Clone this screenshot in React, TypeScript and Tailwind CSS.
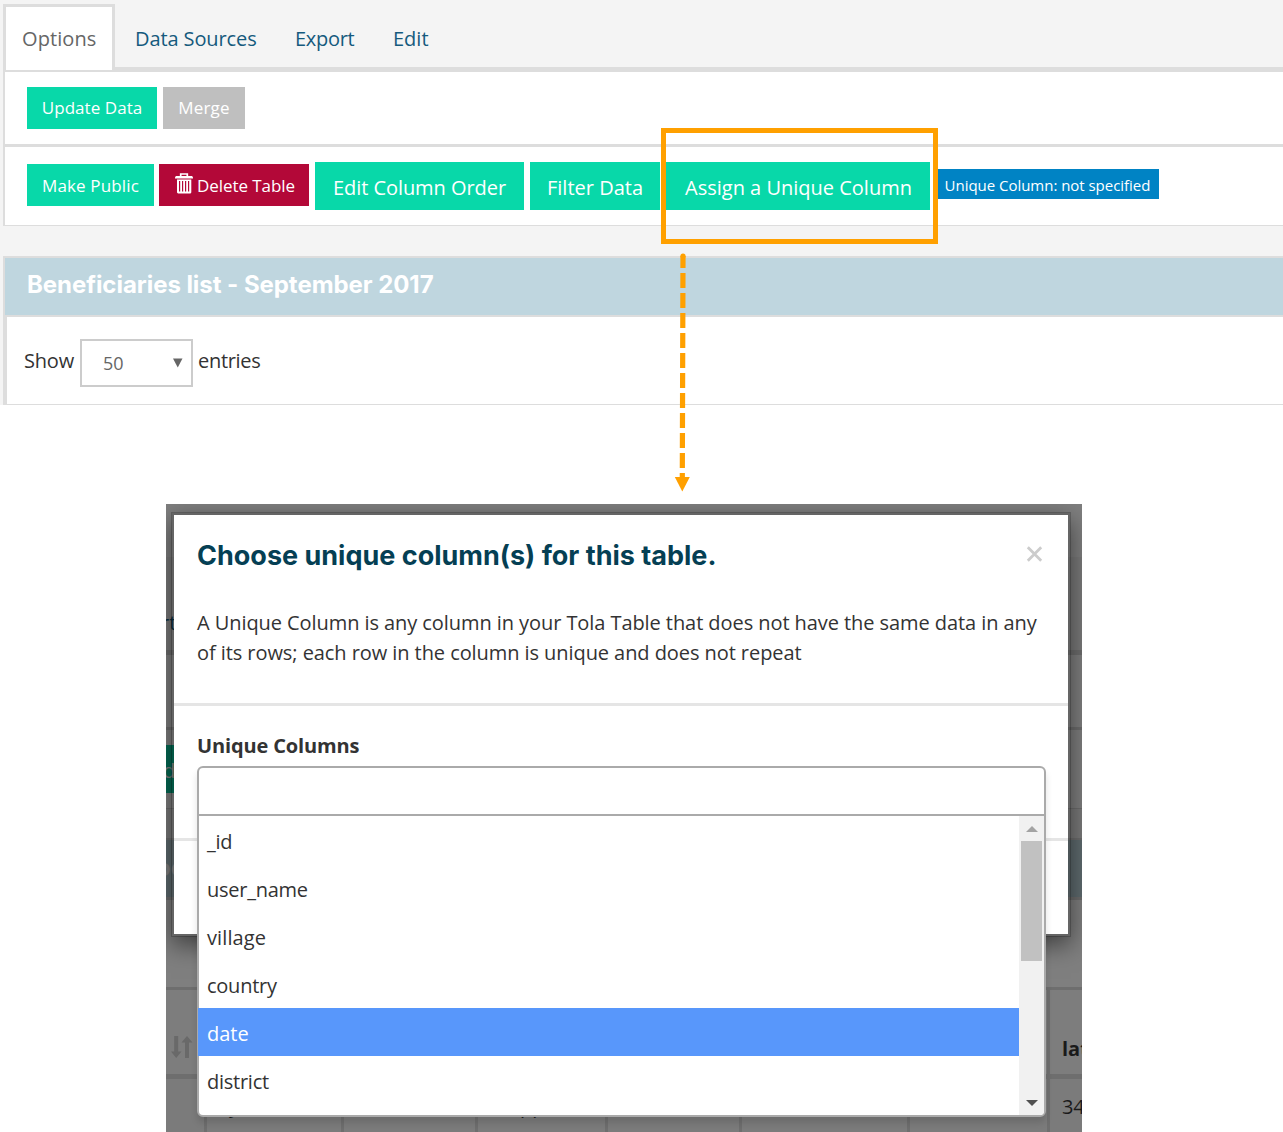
import type { ReactNode } from "react";

const columns = ["_id", "user_name", "village", "country", "date", "district"];

function TrashIcon() {
  return (
    <svg width="18" height="21" viewBox="0 0 18 21" className="shrink-0" fill="none">
      <path d="M5.7 3V1h6.6v2" stroke="#fff" strokeWidth="1.7" />
      <path d="M0 5.6V4.2L1 3h16l1 1.2v1.4z" fill="#fff" />
      <path
        fillRule="evenodd"
        fill="#fff"
        d="M2 6.6h14.3V19.5L15.5 20.5H3L2 19.5zM4 8v10.5h1.2V8zM7 8v10.5h1.2V8zM10 8v10.5h1.2V8zM13 8v10.5h1.2V8z"
      />
    </svg>
  );
}

function SortIcon() {
  return (
    <svg width="22" height="22" viewBox="0 0 22 22" fill="#696969">
      <path d="M3.2 0h4v15.5H10.5L5.2 22 0 15.500h3.200z" />
      <path d="M14 22h4V6.500h3.500L16 0 10.500 6.500H14z" />
    </svg>
  );
}

function Button({ className, children }: { className: string; children: ReactNode }) {
  return (
    <button className={`flex shrink-0 items-center justify-center whitespace-nowrap text-white ${className}`}>
      {children}
    </button>
  );
}

function OptionsPanel() {
  return (
    <section className="h-[405px] shrink-0 bg-[#f4f4f4] pl-[3px] pt-1 text-[20px] text-[#155a7d]">
      <nav className="flex h-[66px] items-stretch">
        <div className="z-10 flex w-[112px] items-center border-x-[3px] border-t-[3px] border-[#ddd] bg-white pl-[16px] tracking-[0.1px] text-[#666]">
          Options
        </div>
        <div className="flex grow items-center border-b-[3px] border-[#ddd] pl-5 pt-1.5">
          <span className="w-[160px] tracking-[-0.1px]">Data Sources</span>
          <span className="w-[98px] tracking-[-0.3px]">Export</span>
          <span>Edit</span>
        </div>
      </nav>

      <div className="flex h-[77px] items-center gap-1.5 border-b-[3px] border-l-2 border-t-2 border-[#ddd] bg-white pl-[22px] text-[17px]">
        <Button className="h-[42px] w-[130px] bg-[#08d8a9] tracking-[0.05px]">Update Data</Button>
        <Button className="h-[42px] w-[82px] bg-[#bfbfbf] tracking-[0.2px]">Merge</Button>
      </div>

      <div className="flex h-[79px] border-b border-l-2 border-[#ddd] bg-white pl-[22px] pt-[15px] text-[17px]">
        <Button className="mt-0.5 h-[42px] w-[127px] bg-[#08d8a9] pt-0.5 tracking-[0.15px]">Make Public</Button>
        <Button className="ml-[5px] mt-0.5 h-[42px] w-[150px] gap-1 bg-[#b30838] pl-0.5 pt-0.5 tracking-[-0.05px]">
          <span className="-mt-1.5">
            <TrashIcon />
          </span>
          Delete Table
        </Button>
        <Button className="ml-1.5 h-12 w-[209px] bg-[#08d8a9] pt-[3px] text-[20px] tracking-[-0.05px]">
          Edit Column Order
        </Button>
        <Button className="ml-1.5 h-12 w-[130px] bg-[#08d8a9] pt-[3px] text-[20px]">Filter Data</Button>
        <Button className="ml-1.5 h-12 w-[264px] bg-[#08d8a9] pl-px pt-[3px] text-[20px]">
          Assign a Unique Column
        </Button>
        <span className="ml-[7px] mt-[7px] flex h-[30px] w-[222px] items-center justify-center whitespace-nowrap bg-[#0083c4] pr-px pt-[3px] text-[15px] tracking-[-0.03px] text-white">
          Unique Column: not specified
        </span>
      </div>

      <div className="mt-[30px] border-l-2 border-t-2 border-[#ddd]">
        <h2 className="h-[57px] bg-[#bfd6df] pl-[22px] font-['Inter',sans-serif] text-[24px] font-bold leading-[54px] tracking-[-0.05px] text-white">
          Beneficiaries list - September 2017
        </h2>
        <div className="flex h-[90px] border-b border-l-2 border-t-2 border-[#ddd] bg-white pl-[17px] pt-[22px] leading-[44px] tracking-[-0.2px] text-[#333]">
          <span className="w-[56px]">Show</span>
          <div className="flex h-12 w-[113px] items-center justify-between border-2 border-[#ccc] pl-[21px] pr-2 text-[18px] tracking-normal text-[#666]">
            <span>50</span>
            <svg width="10" height="10" viewBox="0 0 10 10" fill="#666">
              <path d="M0 0.500h9.500L4.750 9.500z" />
            </svg>
          </div>
          <span className="ml-[5px] tracking-[-0.3px]">entries</span>
        </div>
      </div>
    </section>
  );
}

function Callout() {
  return (
    <>
      <div className="absolute left-[661px] top-[128px] h-[116px] w-[277px] border-[5px] border-[#ffa000]" />
      <svg className="absolute left-[674px] top-[252px]" width="18" height="240" viewBox="0 0 18 240">
        <path d="M9 4L8.300 225" stroke="#ffa000" strokeWidth="5.200" strokeDasharray="15 5" strokeDashoffset="3" />
        <circle cx="9" cy="4" r="2.600" fill="#ffa000" />
        <path d="M0.800 225h15L8.300 239.500z" fill="#ffa000" />
      </svg>
    </>
  );
}

/* The dimmed page that stays visible around the dialog. */
function DimmedPage() {
  return (
    <div className="flex h-full flex-col bg-[#7f7f7f] text-[20px]">
      <div className="h-[53px] shrink-0" />
      <div className="h-[98px] shrink-0 border-b-[5px] border-[#6e6e6e] bg-[#7a7a7a] pt-[49px] leading-[34px] text-[#0a2d3f]">
        <span className="-ml-[5px]">rt</span>
      </div>
      <div className="h-[75px] shrink-0 border-b-[3px] border-[#6e6e6e]" />
      <div className="h-[79px] shrink-0 border-b border-[#6e6e6e] pt-[15px]">
        <div className="h-12 w-10 bg-[#046c55] pt-[2px] leading-[48px] text-[#808080]">
          <span className="-ml-[3px]">d</span>
        </div>
      </div>
      <div className="h-[31px] shrink-0 border-b-2 border-[#6e6e6e] bg-[#7a7a7a]" />
      <div className="h-[60px] shrink-0 border-b-[3px] border-[#6e6e6e] bg-[#5f6b6f] font-['Inter',sans-serif] text-[24px] font-bold leading-[56px] text-[#808080]">
        <span className="-ml-[10px]">oo</span>
      </div>
      <div className="h-[90px] shrink-0 border-b-[3px] border-[#6e6e6e]" />
      <div className="flex h-[89px] shrink-0 border-b-[5px] border-[#6e6e6e] bg-[#7d7d7d]">
        <div className="w-[881px] shrink-0 pl-[5px] pt-[46px]">
          <SortIcon />
        </div>
        <div className="w-9 shrink-0 border-l-[3px] border-[#6e6e6e] pl-3 pt-11 font-bold leading-[30px] text-[#1a1a1a]">
          lat
        </div>
      </div>
      <div className="flex grow bg-[#7b7b7b] leading-[54px] text-[#1a1a1a]">
        <div className="w-[38px] shrink-0" />
        <div className="w-[137px] shrink-0 border-l-[3px] border-[#6e6e6e] pl-[22px]">y</div>
        <div className="w-[134px] shrink-0 border-l-[3px] border-[#6e6e6e]" />
        <div className="w-[130px] shrink-0 border-l-[3px] border-[#6e6e6e] pl-[42px]">pp</div>
        <div className="w-[134px] shrink-0 border-l-[3px] border-[#6e6e6e]" />
        <div className="w-[168px] shrink-0 border-l-[3px] border-[#6e6e6e]" />
        <div className="w-[140px] shrink-0 border-l-[3px] border-[#6e6e6e]" />
        <div className="w-9 shrink-0 border-l-[3px] border-[#6e6e6e] pl-3 pt-px tracking-[-0.3px]">34</div>
      </div>
    </div>
  );
}

function ColumnSelect() {
  return (
    <div className="absolute left-[23px] top-[251px] w-[849px] rounded-[6px] border-2 border-[#aaa] bg-white shadow-[0_6px_7px_rgba(0,0,0,0.12)]">
      <div className="h-12 border-b-2 border-[#aaa]" />
      <div className="flex h-[299px]">
        <ul className="grow">
          {columns.map((name) => (
            <li
              key={name}
              className={
                name === "date"
                  ? "-ml-px h-12 bg-[#5897fb] pl-[9px] pt-[3px] leading-[45px] text-white"
                  : name === "village"
                    ? "h-12 pl-2 pt-[3px] leading-[45px] tracking-[0.1px]"
                    : "h-12 pl-2 pt-[3px] leading-[45px] tracking-[-0.25px]"
              }
            >
              {name}
            </li>
          ))}
        </ul>
        <div className="flex w-[25px] flex-col items-center justify-between rounded-br-[4px] bg-[#f1f1f1] pb-[9px] pt-2.5">
          <div className="flex flex-col items-center gap-[9px]">
            <svg width="12" height="6" viewBox="0 0 12 6" fill="#a3a3a3">
              <path d="M6 0l6 6H0z" />
            </svg>
            <div className="h-[120px] w-[21px] bg-[#c1c1c1]" />
          </div>
          <svg width="12" height="6" viewBox="0 0 12 6" fill="#505050">
            <path d="M0 0h12L6 6z" />
          </svg>
        </div>
      </div>
    </div>
  );
}

function UniqueColumnDialog() {
  return (
    <div className="absolute left-[5px] top-2 h-[425px] w-[900px] border-[3px] border-black/20 bg-white bg-clip-padding text-[#333] shadow-[0_8px_23px_rgba(0,0,0,0.5)]">
      <header className="h-[191px] border-b-[3px] border-[#e5e5e5] pl-[23px] pr-[25px]">
        <div className="flex justify-between pt-[21px]">
          <h3 className="font-['Inter',sans-serif] text-[27px] font-bold leading-10 text-[#053f54]">
            Choose unique column(s) for this table.
          </h3>
          <svg className="mt-2.5" width="17" height="16" viewBox="0 0 17 16" stroke="#ccc" strokeWidth="2.800">
            <path d="M1.800 1.300l13.400 13.400M15.200 1.300L1.800 14.700" />
          </svg>
        </div>
        <p className="mt-8 whitespace-nowrap leading-[30px] tracking-[-0.07px]">
          A Unique Column is any column in your Tola Table that does not have the same data in any
          <br />
          of its rows; each row in the column is unique and does not repeat
        </p>
      </header>
      <div className="h-[135px] border-b-[3px] border-[#e5e5e5] pl-[23px] pt-[25px] font-bold leading-[30px] tracking-[-0.15px]">
        Unique Columns
      </div>
      <ColumnSelect />
    </div>
  );
}

export default function App() {
  return (
    <main className="relative flex h-[1132px] w-[1283px] flex-col overflow-hidden bg-white font-['Open_Sans','Noto_Sans',sans-serif]">
      <OptionsPanel />
      <Callout />
      <section className="relative ml-[166px] mt-[99px] h-[628px] w-[916px] shrink-0 overflow-hidden text-[20px]">
        <DimmedPage />
        <UniqueColumnDialog />
      </section>
    </main>
  );
}
